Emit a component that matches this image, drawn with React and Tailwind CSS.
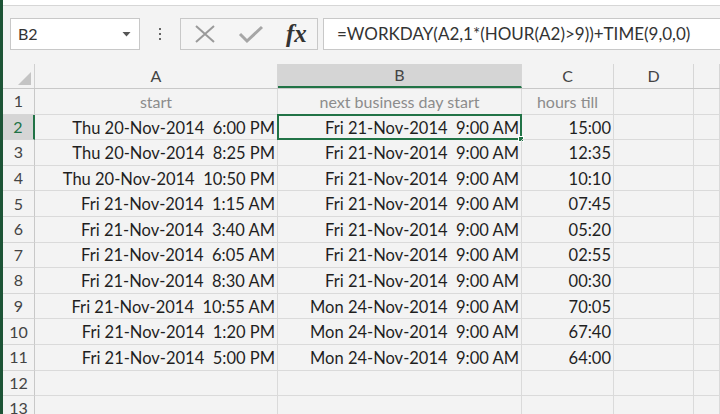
import React from 'react';

const cols = [
  { key: 'A', w: 'w-[243px]' },
  { key: 'B', w: 'w-[244px]' },
  { key: 'C', w: 'w-[92px]' },
  { key: 'D', w: 'w-[80px]' },
  { key: 'E', w: 'flex-1' },
];

const rows = [
  ['start', 'next business day start', 'hours till'],
  ['Thu 20-Nov-2014  6:00 PM', 'Fri 21-Nov-2014  9:00 AM', '15:00'],
  ['Thu 20-Nov-2014  8:25 PM', 'Fri 21-Nov-2014  9:00 AM', '12:35'],
  ['Thu 20-Nov-2014  10:50 PM', 'Fri 21-Nov-2014  9:00 AM', '10:10'],
  ['Fri 21-Nov-2014  1:15 AM', 'Fri 21-Nov-2014  9:00 AM', '07:45'],
  ['Fri 21-Nov-2014  3:40 AM', 'Fri 21-Nov-2014  9:00 AM', '05:20'],
  ['Fri 21-Nov-2014  6:05 AM', 'Fri 21-Nov-2014  9:00 AM', '02:55'],
  ['Fri 21-Nov-2014  8:30 AM', 'Fri 21-Nov-2014  9:00 AM', '00:30'],
  ['Fri 21-Nov-2014  10:55 AM', 'Mon 24-Nov-2014  9:00 AM', '70:05'],
  ['Fri 21-Nov-2014  1:20 PM', 'Mon 24-Nov-2014  9:00 AM', '67:40'],
  ['Fri 21-Nov-2014  5:00 PM', 'Mon 24-Nov-2014  9:00 AM', '64:00'],
  ['', '', ''],
  ['', '', ''],
];

function Toolbar() {
  return (
    <div className="h-[59px] shrink-0 flex items-start pt-[12px] border-t border-[#d6d6d6]">
      {/* name box */}
      <div className="ml-[7px] w-[130px] h-[32px] bg-white border border-[#c8c8c8] flex items-center pl-[7px] pr-[8px]">
        <span className="text-[16px] text-[#333]">B2</span>
        <svg className="ml-auto" width="9" height="6" viewBox="0 0 9 6">
          <path d="M0.5 1 L8.5 1 L4.5 5.5 Z" fill="#555" />
        </svg>
      </div>
      {/* dots */}
      <div className="w-[40px] h-[32px] flex flex-col items-center justify-center gap-[3px]">
        <span className="w-[2px] h-[2px] bg-[#666]" />
        <span className="w-[2px] h-[2px] bg-[#666]" />
        <span className="w-[2px] h-[2px] bg-[#666]" />
      </div>
      {/* cancel / enter / fx */}
      <div className="w-[138px] h-[32px] bg-[#f5f5f5] border border-[#c8c8c8] flex items-center">
        <svg className="ml-[13px]" width="22" height="20" viewBox="0 0 22 20">
          <path d="M2 2 L20 18 M20 2 L2 18" stroke="#9a9a9a" strokeWidth="2" fill="none" />
        </svg>
        <svg className="ml-[22px]" width="26" height="20" viewBox="0 0 26 20">
          <path d="M2 10 L9 17 L24 3" stroke="#a6a6a6" strokeWidth="3" fill="none" />
        </svg>
        <span className="ml-[22px] text-[25px] leading-none italic font-bold text-[#333] font-['Liberation_Serif',serif] -mt-[2px]">
          fx
        </span>
      </div>
      {/* formula */}
      <div className="ml-[5px] flex-1 h-[32px] bg-white border border-[#c8c8c8] border-r-0 flex items-center pl-[13px]">
        <span className="text-[17px] text-[#333] whitespace-nowrap">
          =WORKDAY(A2,1*(HOUR(A2)&gt;9))+TIME(9,0,0)
        </span>
      </div>
    </div>
  );
}

function HeaderRow() {
  return (
    <div className="flex h-[25px] shrink-0 border-b border-[#c8c8c8]">
      <div className="w-[32px] shrink-0 border-r border-[#d0d0d0] flex items-end justify-end pr-[3px] pb-[3px]">
        <svg width="13" height="13" viewBox="0 0 13 13">
          <path d="M13 0 L13 13 L0 13 Z" fill="#c4c4c4" />
        </svg>
      </div>
      {cols.map((c) => (
        <div
          key={c.key}
          className={`${c.w} shrink-0 flex items-center justify-center text-[16px] text-[#444] border-r border-[#d6d6d6] ${
            c.key === 'B' ? 'bg-[#d5d5d5] border-b-2 border-b-[#217346]' : ''
          }`}
        >
          {c.key === 'E' ? '' : c.key}
        </div>
      ))}
    </div>
  );
}

function DataRow({ n, vals }) {
  const first = n === 1;
  const active = n === 2;
  return (
    <div className="flex h-[25.6px] shrink-0">
      <div
        className={`w-[32px] shrink-0 flex items-center justify-center text-[16px] border-b border-[#d6d6d6] ${
          active ? 'bg-[#d5d5d5] text-[#217346] border-r-2 border-r-[#217346]' : 'text-[#444] border-r border-r-[#c8c8c8]'
        }`}
      >
        {n}
      </div>
      {cols.map((c, i) => {
        const v = vals[i] || '';
        const isActive = active && c.key === 'B';
        return (
          <div
            key={c.key}
            className={`${c.w} shrink-0 relative flex items-center pt-[2px] border-r border-b border-[#dadada] whitespace-pre ${
              first ? 'justify-center text-[16px] text-[#8c8c8c]' : 'justify-end pr-[2px] text-[16.5px] text-[#1f1f1f]'
            }`}
          >
            {v}
            {isActive && (
              <div className="absolute -left-[1px] -top-[1px] -right-[1px] -bottom-[1px] border-2 border-[#217346]">
                <span className="absolute -right-[4px] -bottom-[4px] w-[6px] h-[6px] bg-[#217346] border border-white" />
              </div>
            )}
          </div>
        );
      })}
    </div>
  );
}

export default function App() {
  return (
    <div className="w-[720px] h-[414px] overflow-hidden flex bg-[#f3f3f3] font-['Lato',sans-serif]">
      <div className="w-[3px] shrink-0 bg-[#1d5436]" />
      <div className="flex-1 flex flex-col min-w-0">
        <div className="h-[5px] bg-white shrink-0" />
        <Toolbar />
        <HeaderRow />
        {rows.map((r, i) => (
          <DataRow key={i} n={i + 1} vals={r} />
        ))}
      </div>
    </div>
  );
}
